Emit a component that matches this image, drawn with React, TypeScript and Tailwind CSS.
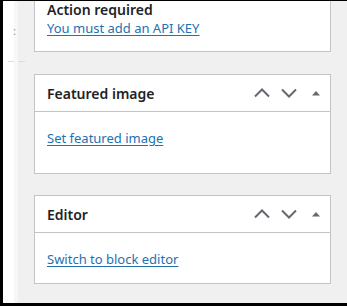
const ChevronUp = () => (
  <svg width="16" height="16" viewBox="0 0 16 16" fill="none">
    <path d="M1 11.5 8 4.5l7 7" stroke="#646970" strokeWidth="2" />
  </svg>
);

const ChevronDown = () => (
  <svg width="16" height="16" viewBox="0 0 16 16" fill="none">
    <path d="M1 4.5l7 7 7-7" stroke="#646970" strokeWidth="2" />
  </svg>
);

const TriangleUp = () => (
  <svg width="10" height="10" viewBox="0 0 10 10">
    <path d="M1 7.5 5 3l4 4.5z" fill="#646970" />
  </svg>
);

interface BoxProps {
  title: string;
  link: string;
  bodyClass: string;
}

const MetaBox = ({ title, link, bodyClass }: BoxProps) => {
  return (
    <div className="border border-[#c3c4c7] bg-white">
      <div className="flex h-[37px] items-center justify-between border-b border-[#c3c4c7] pl-3 pr-px">
        <h2 className="text-[14px] font-semibold text-[#1d2327]">{title}</h2>
        <div className="flex items-center">
          <span className="flex h-[27px] w-[27px] items-center justify-center">
            <ChevronUp />
          </span>
          <span className="flex h-[27px] w-[27px] items-center justify-center">
            <ChevronDown />
          </span>
          <span className="flex h-[27px] w-[27px] items-center justify-center">
            <TriangleUp />
          </span>
        </div>
      </div>
      <div className={`px-3 text-[13px] leading-[19px] ${bodyClass}`}>
        <a href="#" className="text-[#2271b1] underline underline-offset-2">
          {link}
        </a>
      </div>
    </div>
  );
};

export default function App() {
  return (
    <div
      className="flex h-[306px] w-[347px] overflow-hidden bg-black pb-[3px] pl-[3px] pt-px"
      style={{ fontFamily: '"Noto Sans", "Open Sans", Arial, sans-serif' }}
    >
      <div className="relative w-[11px] bg-white">
        <div className="absolute left-[5px] top-[60px] h-px w-[17px] bg-[#dcdcde]" />
      </div>
      <div className="relative w-[4px] bg-[#f6f7f7]">
        <span className="absolute left-[-1px] top-[22px] text-[11px] text-[#8c8f94]">:</span>
      </div>
      <div className="flex flex-1 flex-col bg-[#f0f0f1] pl-4 pr-4">
        <div className="border-x border-b border-[#c3c4c7] bg-white px-3 pb-[13px] leading-[19px]">
          <p className="-mt-px text-[14px] font-semibold text-[#1d2327]">Action required</p>
          <div className="text-[13px]">
            <a href="#" className="text-[#2271b1] underline underline-offset-2">
              You must add an API KEY
            </a>
          </div>
        </div>
        <div className="mt-[22px]">
          <MetaBox title="Featured image" link="Set featured image" bodyClass="pt-[17px] pb-[25px]" />
        </div>
        <div className="mt-[21px]">
          <MetaBox title="Editor" link="Switch to block editor" bodyClass="pt-[17px] pb-[14px]" />
        </div>
      </div>
    </div>
  );
}
